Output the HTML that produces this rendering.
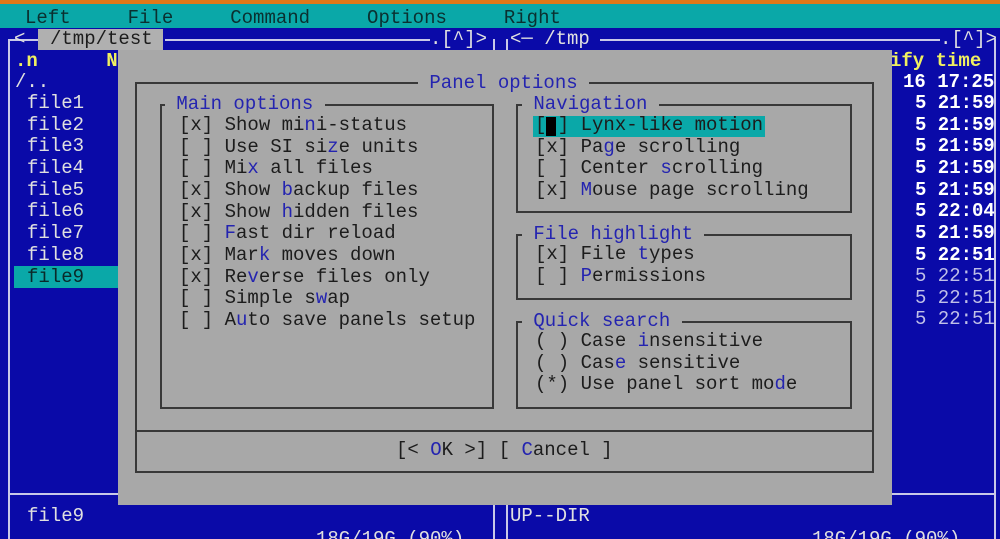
<!DOCTYPE html>
<html><head><meta charset="utf-8"><style>
html,body{margin:0;width:1000px;height:539px;overflow:hidden}
body{background:#0a0aa8;position:relative;font-family:"Liberation Mono",monospace;font-size:19px}
.t{position:absolute;white-space:pre;line-height:22px;height:22px}
.h{color:#2424b0}
.w{color:#e0e0e0}
.y{color:#f0f060;font-weight:bold}
.k{color:#1c1c1c}
.ln{position:absolute;background:#c8c8e8}
.dl{position:absolute;border:2px solid #383838;box-sizing:border-box}
</style></head><body>
<div style="position:absolute;left:0;top:0;width:1000px;height:4px;background:#e07818"></div>
<div style="position:absolute;left:0;top:4px;width:1000px;height:24px;background:#0aa8a8"></div>
<div class="t" style="left:25px;top:7px;color:#0a3030">Left     File     Command     Options     Right</div>

<div class="ln" style="left:8px;top:39px;width:2px;height:500px"></div>
<div class="ln" style="left:8px;top:39px;width:30px;height:2px"></div>
<div class="t w" style="left:14px;top:28px">&lt;</div>
<div style="position:absolute;left:38px;top:29px;width:125px;height:21px;background:#b0b0b0"></div>
<div class="t k" style="left:50px;top:28px">/tmp/test</div>
<div class="ln" style="left:165px;top:39px;width:265px;height:2px"></div>
<div class="t w" style="left:430px;top:28px">.[^]&gt;</div>
<div class="ln" style="left:493px;top:39px;width:2px;height:500px"></div>
<div class="ln" style="left:506px;top:39px;width:2px;height:500px"></div>
<div class="t w" style="left:510px;top:28px">&lt;─ /tmp</div>
<div class="ln" style="left:600px;top:39px;width:340px;height:2px"></div>
<div class="t w" style="left:940px;top:28px">.[^]&gt;</div>
<div class="ln" style="left:994px;top:39px;width:2px;height:500px"></div>
<div class="ln" style="left:8px;top:493px;width:487px;height:2px"></div>
<div class="ln" style="left:506px;top:493px;width:490px;height:2px"></div>

<div class="t y" style="left:15px;top:50px">.n      N</div>
<div class="t w" style="left:15px;top:71px">/..</div>
<div class="t w" style="left:27px;top:93px;line-height:21.65px;height:180px">file1
file2
file3
file4
file5
file6
file7
file8</div>
<div style="position:absolute;left:14px;top:266px;width:104px;height:22px;background:#0aa8a8"></div>
<div class="t" style="left:27px;top:266px;color:#0a2a2a">file9</div>

<div class="t y" style="left:890px;top:50px">ify time</div>
<div class="t" style="left:903px;top:71px;color:#fff;font-weight:bold">16 17:25</div>
<div class="t" style="left:915px;top:93px;color:#fff;font-weight:bold;line-height:21.65px;height:200px">5 21:59
5 21:59
5 21:59
5 21:59
5 21:59
5 22:04
5 21:59
5 22:51</div>
<div class="t" style="left:915px;top:266px;color:#c0c0e8;line-height:21.65px;height:100px">5 22:51
5 22:51
5 22:51</div>

<div class="t w" style="left:27px;top:505px">file9</div>
<div class="t w" style="left:510px;top:505px">UP--DIR</div>
<div class="t w" style="left:316px;top:528px">18G/19G (90%)</div>
<div class="t w" style="left:812px;top:528px">18G/19G (90%)</div>

<div style="position:absolute;left:118px;top:50px;width:774px;height:455px;background:#a8a8a8"></div>
<div class="dl" style="left:135px;top:82px;width:739px;height:391px"></div>
<div class="dl" style="left:135px;top:430px;width:739px;height:2px;border-width:1px"></div>
<div class="t h" style="left:418px;top:72px;background:#a8a8a8"> Panel options </div>

<div class="dl" style="left:160px;top:104px;width:334px;height:305px"></div>
<div class="t h" style="left:165px;top:93px;background:#a8a8a8"> Main options </div>
<div class="t k" style="left:179px;top:115px;line-height:21.65px;height:220px">[x] Show mi<span class="h">n</span>i-status
[ ] Use SI si<span class="h">z</span>e units
[ ] Mi<span class="h">x</span> all files
[x] Show <span class="h">b</span>ackup files
[x] Show <span class="h">h</span>idden files
[ ] <span class="h">F</span>ast dir reload
[x] Mar<span class="h">k</span> moves down
[x] Re<span class="h">v</span>erse files only
[ ] Simple s<span class="h">w</span>ap
[ ] A<span class="h">u</span>to save panels setup</div>

<div class="dl" style="left:516px;top:104px;width:336px;height:109px"></div>
<div class="t h" style="left:522px;top:93px;background:#a8a8a8"> Navigation </div>
<div style="position:absolute;left:533px;top:116px;width:232px;height:21px;background:#0aa8a8"></div>
<div style="position:absolute;left:546px;top:117px;width:10px;height:19px;background:#000"></div>
<div class="t k" style="left:535px;top:115px;line-height:21.65px;height:100px">[ ] Lynx-like motion
[x] Pa<span class="h">g</span>e scrolling
[ ] Center <span class="h">s</span>crolling
[x] <span class="h">M</span>ouse page scrolling</div>

<div class="dl" style="left:516px;top:234px;width:336px;height:66px"></div>
<div class="t h" style="left:522px;top:223px;background:#a8a8a8"> File highlight </div>
<div class="t k" style="left:535px;top:244px;line-height:21.65px;height:50px">[x] File <span class="h">t</span>ypes
[ ] <span class="h">P</span>ermissions</div>

<div class="dl" style="left:516px;top:321px;width:336px;height:88px"></div>
<div class="t h" style="left:522px;top:310px;background:#a8a8a8"> Quick search </div>
<div class="t k" style="left:535px;top:331px;line-height:21.65px;height:70px">( ) Case <span class="h">i</span>nsensitive
( ) Cas<span class="h">e</span> sensitive
(*) Use panel sort mo<span class="h">d</span>e</div>

<div class="t k" style="left:396px;top:439px">[&lt; <span class="h">O</span>K &gt;] [ <span class="h">C</span>ancel ]</div>
</body></html>
